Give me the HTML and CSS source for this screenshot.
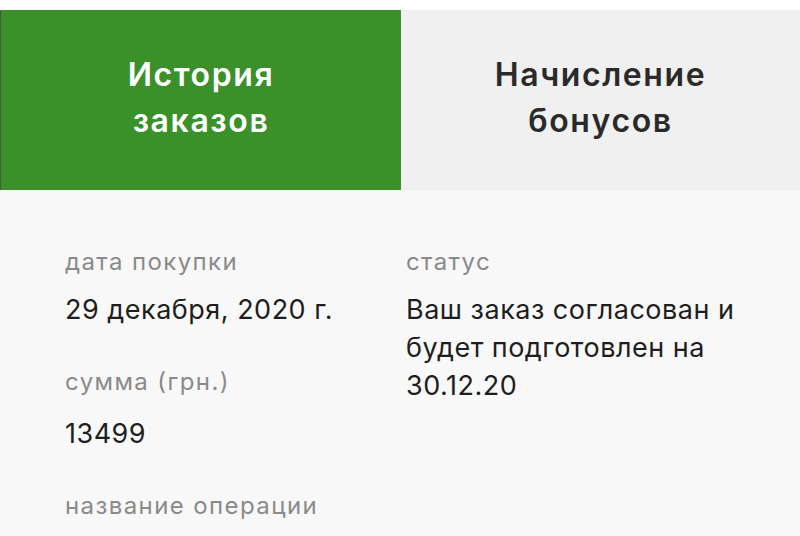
FILE: index.html
```html
<!DOCTYPE html>
<html lang="ru">
<head>
<meta charset="utf-8">
<link rel="stylesheet" href="styles.css">
</head>
<body>
<div class="page">
  <div class="tabs">
    <div class="tab tab-active">История<br>заказов</div>
    <div class="tab tab-idle">Начисление<br>бонусов</div>
  </div>
  <div class="content">
    <div class="col">
      <div class="field">
        <div class="label">дата покупки</div>
        <div class="value">29 декабря, 2020 г.</div>
      </div>
      <div class="field">
        <div class="label">сумма (грн.)</div>
        <div class="value">13499</div>
      </div>
      <div class="field">
        <div class="label">название операции</div>
      </div>
    </div>
    <div class="col">
      <div class="field">
        <div class="label">статус</div>
        <div class="value">Ваш заказ согласован и будет подготовлен на 30.12.20</div>
      </div>
    </div>
  </div>
</div>
</body>
</html>
```
FILE: styles.css
```css
* { box-sizing: border-box; }
html, body { margin: 0; padding: 0; }
body {
  width: 800px;
  height: 536px;
  overflow: hidden;
  background: #f8f8f8;
  font-family: Inter, Roboto, "Noto Sans", sans-serif;
}
.page {
  padding-top: 10px;
  background: #ffffff;
}
.tabs {
  display: grid;
  grid-template-columns: 401px 399px;
  height: 180px;
}
.tab {
  display: flex;
  align-items: center;
  justify-content: center;
  text-align: center;
  font-size: 32px;
  font-weight: 600;
  line-height: 46px;
  letter-spacing: 1.6px;
  padding-bottom: 4px;
}
.tab-active {
  background: #3a9129;
  color: #ffffff;
  border-left: 1px solid #4a5a48;
}
.tab-idle {
  background: #f0f0f0;
  color: #2a2a2a;
}
.content {
  background: #f8f8f8;
  display: grid;
  grid-template-columns: 341px 1fr;
  padding: 57px 0 0 65px;
  height: 346px;
}
.field {
  margin-bottom: 38px;
}
.field + .field .label {
  margin-bottom: 18px;
}
.label {
  font-size: 24px;
  line-height: 30px;
  letter-spacing: 1.4px;
  color: #8a8a8a;
  margin-bottom: 14px;
}
.value {
  font-size: 27px;
  line-height: 38px;
  letter-spacing: 0.5px;
  color: #1e1e1e;
  max-width: 380px;
}
```
